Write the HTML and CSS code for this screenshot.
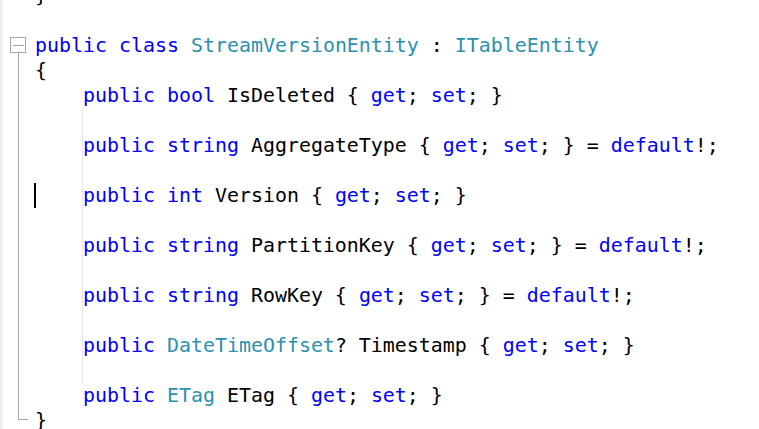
FILE: index.html
```html
<!DOCTYPE html>
<html>
<head>
<meta charset="utf-8">
<link rel="stylesheet" href="styles.css">
</head>
<body>
<div class="editor">
  <div class="strip"></div>
  <svg class="outline" width="32" height="429" viewBox="0 0 32 429">
    <rect x="7.5" y="37.5" width="15" height="15" fill="#fff" stroke="#a5a5a5" stroke-width="1"/>
    <line x1="10" y1="45.5" x2="21" y2="45.5" stroke="#a5a5a5" stroke-width="1"/>
    <path d="M15.5 53 V419.5 H25" fill="none" stroke="#a5a5a5" stroke-width="1"/>
  </svg>
  <div class="code">
    <div class="ln">}</div>
    <div class="ln"></div>
    <div class="ln"><span class="kw">public</span> <span class="kw">class</span> <span class="ty">StreamVersionEntity</span> : <span class="ty">ITableEntity</span></div>
    <div class="ln">{</div>
    <div class="ln">    <span class="kw">public</span> <span class="kw">bool</span> IsDeleted { <span class="kw">get</span>; <span class="kw">set</span>; }</div>
    <div class="ln g"></div>
    <div class="ln g">    <span class="kw">public</span> <span class="kw">string</span> AggregateType { <span class="kw">get</span>; <span class="kw">set</span>; } = <span class="kw">default</span>!;</div>
    <div class="ln g"></div>
    <div class="ln g caret">    <span class="kw">public</span> <span class="kw">int</span> Version { <span class="kw">get</span>; <span class="kw">set</span>; }</div>
    <div class="ln g"></div>
    <div class="ln g">    <span class="kw">public</span> <span class="kw">string</span> PartitionKey { <span class="kw">get</span>; <span class="kw">set</span>; } = <span class="kw">default</span>!;</div>
    <div class="ln g"></div>
    <div class="ln g">    <span class="kw">public</span> <span class="kw">string</span> RowKey { <span class="kw">get</span>; <span class="kw">set</span>; } = <span class="kw">default</span>!;</div>
    <div class="ln g"></div>
    <div class="ln g">    <span class="kw">public</span> <span class="ty">DateTimeOffset</span>? Timestamp { <span class="kw">get</span>; <span class="kw">set</span>; }</div>
    <div class="ln g"></div>
    <div class="ln">    <span class="kw">public</span> <span class="ty">ETag</span> ETag { <span class="kw">get</span>; <span class="kw">set</span>; }</div>
    <div class="ln">}</div>
  </div>
</div>
</body>
</html>
```
FILE: styles.css
```css
html, body {
  margin: 0;
  padding: 0;
  background: #ffffff;
  overflow: hidden;
}
.editor {
  display: flex;
  width: 759px;
  height: 429px;
  overflow: hidden;
}
.strip {
  width: 3px;
  flex: none;
  background: #f0f0f0;
}
.outline {
  flex: none;
  display: block;
}
.code {
  flex: 1;
  margin-top: -17.5px;
  font-family: "DejaVu Sans Mono", "Liberation Mono", monospace;
  font-size: 19.93px;
  line-height: 25px;
  color: #000000;
}
.ln {
  height: 25px;
  position: relative;
  white-space: pre;
}
.g {
  background: linear-gradient(#e6e6e6, #e6e6e6) no-repeat 47px 0 / 1px 100%;
}
.caret::before {
  content: "";
  position: absolute;
  left: -1px;
  top: 0;
  width: 2px;
  height: 25px;
  background: #000000;
}
.kw {
  color: #0000ff;
}
.ty {
  color: #2b91af;
}
```
